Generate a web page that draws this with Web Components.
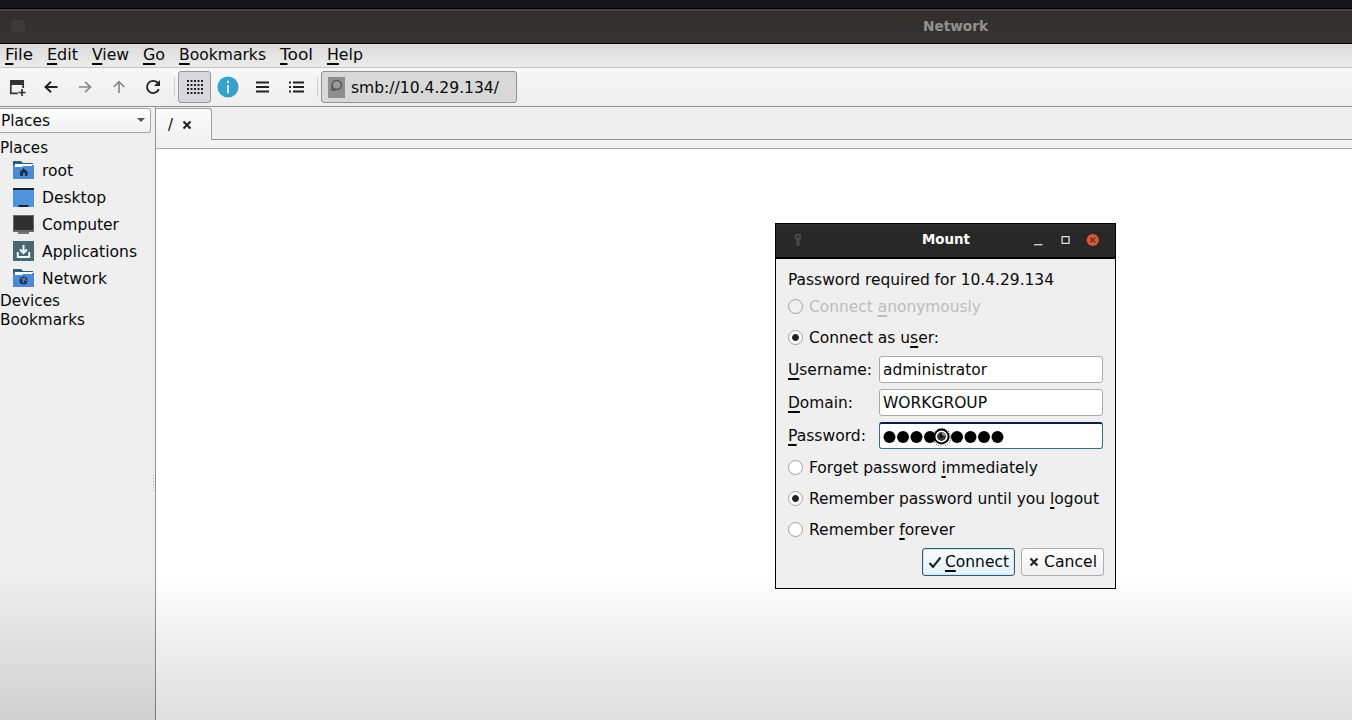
<!DOCTYPE html>
<html lang="en"><head><meta charset="utf-8"><title>Network</title>
<style>
html,body{margin:0;height:720px;overflow:hidden;background:#efefef}
body{font:16px/19px "DejaVu Sans",sans-serif;color:#080808}
</style></head><body><file-manager></file-manager>
<script>
const def=(name,html,setup)=>customElements.define(name,class extends HTMLElement{
  constructor(){super();this.attachShadow({mode:'open'}).innerHTML=html}
  connectedCallback(){if(setup)setup(this,this.shadowRoot)}
});
const svg=(w,h,body,x='')=>`<svg width="${w}" height="${h}" viewBox="0 0 ${w} ${h}" fill="none" ${x}>${body}</svg>`;
const folder='<path d="M0 1h8l2 2h10v16H0z" fill="#2f5f74"/><path d="M2 4h18v4H1z" fill="#f4fbff"/><path d="M0 6h9l2-1h10v14H0z" fill="#4f89d4"/><path d="M2 4h17v2H10L9 7H2z" fill="#f4fbff"/>';
const icons={
 newwin:svg(18,18,'<path d="M2 2h14v5H2z" fill="#333"/><path d="M2.8 6v9.3h7M15.2 6v4M14 11v7M10.5 14.5h7" stroke="#333" stroke-width="1.7"/>'),
 back:svg(18,18,'<path d="M15.5 9H4M9 3.8L3.5 9 9 14.2" stroke="#222" stroke-width="1.9"/>'),
 fwd:svg(18,18,'<path d="M3 9h11.5M9 3.8L14.5 9 9 14.2" stroke="#888" stroke-width="1.7"/>'),
 up:svg(18,18,'<path d="M9 15V4M3.7 9L9 3.7 14.3 9" stroke="#888" stroke-width="1.7"/>'),
 reload:svg(18,18,'<path d="M14.8 11.2A6.1 6.1 0 1 1 13.5 4.7L15 6.3" stroke="#222" stroke-width="1.9"/><path d="M16 2v6h-6z" fill="#222"/>'),
 grid:svg(18,18,[3,7,11,15].map(y=>[2,5.5,9,12.5,16].map(x=>`<path d="M${x-1} ${y-1}h2v2h-2z" fill="#222"/>`).join('')).join('')),
 info:svg(22,22,'<circle cx="11" cy="11" r="10.5" fill="#35a1cc"/><path d="M11 9v8.5M11 4.8v2.4" stroke="#e5faff" stroke-width="1.7"/>'),
 list:svg(18,18,'<path d="M3 4.5h13M3 9h13M3 13.5h13" stroke="#222" stroke-width="2"/>'),
 tree:svg(18,18,'<path d="M2 4.5h2M2 9h2M2 13.5h2M6 4.5h11M6 9h11M6 13.5h11" stroke="#222" stroke-width="1.9"/>'),
 drive:svg(17,21,'<path d="M0 0h17v21H0z" fill="#8e8e8e"/><circle cx="8.7" cy="8" r="4.6" stroke="#555" stroke-width="1.5" fill="#999"/><path d="M4 8v5h4" stroke="#555" stroke-width="1.3"/>'),
 arrow:svg(9,5,'<path d="M0 0h8L4 4z" fill="#505050"/>'),
 x:svg(10,10,'<path d="M1.5 1.5l7 7M8.5 1.5l-7 7" stroke="#222" stroke-width="2.1"/>'),
 root:svg(21,20,folder+'<path d="M7 12l3.5-4 4 4v4h-2.4v-3h-2v3H7z" fill="#17334f"/>'),
 desktop:svg(21,20,'<path d="M0 1h21v19H0z" fill="#4f93dc"/><path d="M0 1h21v2H0zM5.5 18h10v2h-10z" fill="#152033"/>'),
 computer:svg(21,20,'<path d="M0 1h21v17H0z" fill="#686868"/><path d="M1 2h19v14H1z" fill="#303030"/><path d="M5 18h11v2H5z" fill="#777"/>'),
 apps:svg(21,20,'<path d="M0 0h21v20H0z" fill="#496872"/><path d="M10.5 4v7M7 8.5l3.5 3.5L14 8.5M4.8 11v5h11.4v-5" stroke="#eef7f8" stroke-width="2"/>'),
 network:svg(21,20,folder+'<circle cx="10.5" cy="12.5" r="4" fill="#17334f"/><path d="M8 10l2 1v2l1 2M12 9.5l-1 2 3 1" stroke="#4f89d4" stroke-width="1.3"/>'),
 check:svg(14,14,'<path d="M1.5 8l3.5 3.8L12.5 2.5" stroke="#222" stroke-width="2.1"/>')
};
/* Text run condensed to a given advance width; a <u> child is the access key. */
def('fit-text',`<style>:host{display:block;flex:none;white-space:pre;height:19px;line-height:19px}
span{display:inline-block;transform-origin:0 50%}::slotted(u){text-decoration:underline;text-decoration-thickness:2px;text-underline-offset:3px;text-decoration-skip-ink:none}</style><span><slot></slot></span>`,(h,r)=>{
 const fit=()=>{const s=r.querySelector('span'),w=+h.getAttribute('w');h.style.width=w+'px';const n=s.offsetWidth;if(n)s.style.transform=`scaleX(${w/s.getBoundingClientRect().width})`};
 requestAnimationFrame(fit)});
def('ui-icon','<style>:host{display:flex;flex:none;align-items:center;justify-content:center}svg{display:block}</style><div></div>',(h,r)=>{r.querySelector('div').innerHTML=icons[h.getAttribute('name')]});
def('title-bar',`<style>:host{display:block;background:#15141a;height:44px}.edge{height:8px}.bar{box-sizing:border-box;height:36px;border-top:1px solid #000;border-bottom:1px solid #000;background:linear-gradient(#45444a 0 2px,#302f2d 2px,#353432);display:flex;align-items:center;padding-left:11px;color:#929190;font:bold 14px/19px "DejaVu Sans",sans-serif}i{width:14px;height:12px;border-radius:3px;background:#3c3b3a;margin-right:898px}</style><div class="edge"></div><div class="bar"><i></i><fit-text w="65">Network</fit-text></div>`);
def('menu-bar',`<style>:host{display:flex;align-items:center;box-sizing:border-box;height:24px;padding:0 0 2px 5px;border-bottom:1px solid #c6c6c6;background:linear-gradient(#dcdcdc,#ebebeb)}fit-text{margin-right:14px}</style>
<fit-text w="28"><u>F</u>ile</fit-text><fit-text w="31" style="margin-right:14px"><u>E</u>dit</fit-text><fit-text w="37"><u>V</u>iew</fit-text><fit-text w="22"><u>G</u>o</fit-text><fit-text w="87"><u>B</u>ookmarks</fit-text><fit-text w="33"><u>T</u>ool</fit-text><fit-text w="36"><u>H</u>elp</fit-text>`);
def('tool-bar',`<style>:host{display:flex;align-items:center;box-sizing:border-box;height:39px;border-bottom:1px solid #929292;background:linear-gradient(#f7f7f7,#eee)}
ui-icon{width:34px;height:32px;box-sizing:border-box}.on{border:1px solid #999;border-radius:3px;background:#d8d8da;width:33px}hr{border:0;width:1px;height:20px;background:#cfcfcf;margin:0}
.path{box-sizing:border-box;width:196px;height:32px;border:1px solid #929292;border-radius:3px;background:#d8d8d8;margin-left:3px;display:flex;align-items:center;padding-left:6px}.path ui-icon{width:17px;margin-right:6px}</style>
<ui-icon name="newwin"></ui-icon><ui-icon name="back"></ui-icon><ui-icon name="fwd"></ui-icon><ui-icon name="up"></ui-icon><ui-icon name="reload"></ui-icon><hr style="margin:0 3px 0 4px"><ui-icon class="on" name="grid"></ui-icon><ui-icon name="info"></ui-icon><ui-icon name="list"></ui-icon><ui-icon name="tree"></ui-icon><hr style="margin-left:4px"><div class="path"><ui-icon name="drive"></ui-icon><fit-text w="148">smb://10.4.29.134/</fit-text></div>`);
def('place-item',`<style>:host{display:flex;align-items:center;height:26.9px;padding-left:13px;gap:8px}</style><ui-icon></ui-icon><slot></slot>`,(h,r)=>{const i=r.querySelector('ui-icon');i.setAttribute('name',h.getAttribute('icon'));i.remove();r.insertBefore(i,r.querySelector('slot'))});
def('side-bar',`<style>:host{display:block;width:155px;flex:none;background:#efefef;position:relative}.combo{box-sizing:border-box;margin-top:1px;width:151px;height:25px;border:1px solid #a5a5a5;border-left:0;border-radius:0 3px 3px 0;background:linear-gradient(#fff,#f0f0f0);display:flex;align-items:center;justify-content:space-between;padding:0 4px 1px 1px}.first{margin-top:5px}.grip{position:absolute;left:153px;top:368px;width:1px;height:17px;background:repeating-linear-gradient(#aaa 0 1px,#efefef 1px 3px)}</style>
<div class="combo"><fit-text w="49">Places</fit-text><ui-icon name="arrow"></ui-icon></div>
<fit-text class="first" w="48">Places</fit-text>
<place-item icon="root"><fit-text w="31">root</fit-text></place-item><place-item icon="desktop"><fit-text w="64">Desktop</fit-text></place-item><place-item icon="computer"><fit-text w="77">Computer</fit-text></place-item><place-item icon="apps"><fit-text w="95">Applications</fit-text></place-item><place-item icon="network"><fit-text w="65">Network</fit-text></place-item>
<fit-text w="60">Devices</fit-text><fit-text w="85">Bookmarks</fit-text><div class="grip"></div>`);
def('tab-view',`<style>:host{display:flex;flex-direction:column;flex:1;border-left:1px solid #929292}.tabs{height:33px;display:flex;flex:none}.tab{box-sizing:border-box;width:56px;margin-top:1px;border:1px solid #a0a0a0;border-left:0;border-bottom:0;border-radius:0 3px 0 0;background:linear-gradient(#fafafa,#f2f2f2);display:flex;align-items:center;padding:0 0 0 12px;gap:9px}.rest{flex:1;border-bottom:1px solid #929292;box-sizing:border-box}.gap{height:9px;box-sizing:border-box;border-bottom:1px solid #a5a5a5;background:#f2f2f2;flex:none}.content{flex:1;background:#fff}</style>
<div class="tabs"><div class="tab"><fit-text w="5">/</fit-text><ui-icon name="x"></ui-icon></div><div class="rest"></div></div><div class="gap"></div><div class="content"></div>`);
def('radio-row',`<style>:host{display:flex;align-items:center;height:31px;gap:6px}i{box-sizing:border-box;width:15px;height:15px;border:1px solid #a2a2a2;border-radius:50%;background:#fff}:host([checked]) i{background:radial-gradient(circle,#222 0 3px,#fff 3.8px)}:host([disabled]){color:#bdbdbd}:host([disabled]) i{background:#f0f0f0}</style><i></i><slot></slot>`);
def('field-row',`<style>:host{display:flex;align-items:center;height:33px}.l{width:91px}.box{box-sizing:border-box;width:225px;height:27px;border:1px solid #a9a9a9;border-radius:3px;background:#fff;padding:0 0 1px 3px;display:flex;align-items:center;position:relative}:host([focus]) .box{border:1px solid #356f83;border-top:2px solid #17184b}</style><div class="l"><slot name="label"></slot></div><div class="box"><slot></slot></div>`);
def('pass-dots',`<style>:host{display:flex;position:relative}svg{display:block}</style>${svg(135,20,[0,1,2,3,4,5,6,7,8].map(i=>`<circle cx="${6.5+i*13.5}" cy="11" r="6" fill="#000"/>`).join('')+'<circle cx="59" cy="11.5" r="8.8" stroke="#222" stroke-width="1" stroke-dasharray="1 1.4"/><circle cx="58.5" cy="10.5" r="7" fill="#fff" stroke="#000" stroke-width="1.8"/><circle cx="58.5" cy="10.5" r="4.4" fill="#333"/><path d="M59 10V6a4.2 4.2 0 0 1 4 4z" fill="#888"/><circle cx="58.5" cy="10" r="1.5" fill="#000"/>')}`);
def('push-button',`<style>:host{display:flex;align-items:center;box-sizing:border-box;height:28px;border:1px solid #adadad;border-radius:3px;background:linear-gradient(#fff,#efefef);padding:0 0 1px 7px;gap:5px}:host([default]){border-color:#315a73;background:linear-gradient(#fbfdff,#e3f1f8);padding-left:5px;gap:3px;box-shadow:inset 0 0 0 1px #cce6f2}</style><slot></slot>`);
def('mount-dialog',`<style>:host{display:block;position:absolute;left:775px;top:223px;width:341px;height:366px;box-sizing:border-box;border:1px solid #000;border-right-width:1.5px;background:#efefef}.head{box-sizing:border-box;height:35px;background:linear-gradient(#303030,#272727 3px,#282828);border-bottom:2px solid #000;display:flex;align-items:center;padding:0 14px 2px 18px;color:#fff;font:bold 14px/19px "DejaVu Sans",sans-serif}.head fit-text{margin:0 64px 0 120px}.body{padding:11px 12px 0 12px}.anon{height:25px;margin-top:5px;margin-bottom:3px}.buttons{display:flex;justify-content:flex-end;gap:6px;margin-top:3px;width:316px}svg{display:block}</style>
<div class="head">${svg(8,14,'<circle cx="4" cy="4" r="3.5" fill="#484848"/><path d="M2.5 7h3v6h-3z" fill="#484848"/><circle cx="4" cy="3.5" r="1" fill="#222"/>')}<fit-text w="48">Mount</fit-text>${svg(68,14,'<path d="M0 11.8h8.5" stroke="#ddd" stroke-width="1.3"/><path d="M28.5 3.5h7v7h-7z" stroke="#ddd" stroke-width="1.3"/><circle cx="59.5" cy="7" r="6.2" fill="#d9573a"/><path d="M57 4.5l5 5M62 4.5l-5 5" stroke="#692718" stroke-width="1.2"/>')}</div>
<div class="body"><fit-text w="266">Password required for 10.4.29.134</fit-text>
<radio-row class="anon" disabled><fit-text w="172">Connect <u>a</u>nonymously</fit-text></radio-row>
<radio-row><fit-text w="130">Connect as u<u>s</u>er:</fit-text></radio-row>
<field-row><fit-text slot="label" w="84"><u>U</u>sername:</fit-text><fit-text w="104">administrator</fit-text></field-row>
<field-row><fit-text slot="label" w="65"><u>D</u>omain:</fit-text><fit-text w="104">WORKGROUP</fit-text></field-row>
<field-row focus><fit-text slot="label" w="78"><u>P</u>assword:</fit-text><pass-dots></pass-dots></field-row>
<radio-row><fit-text w="229">Forget password <u>i</u>mmediately</fit-text></radio-row>
<radio-row checked><fit-text w="290">Remember password until you <u>l</u>ogout</fit-text></radio-row>
<radio-row><fit-text w="146">Remember <u>f</u>orever</fit-text></radio-row>
<div class="buttons"><push-button default style="width:93px"><ui-icon name="check"></ui-icon><fit-text w="64"><u>C</u>onnect</fit-text></push-button><push-button style="width:83px"><ui-icon name="x"></ui-icon><fit-text w="53">Cancel</fit-text></push-button></div></div>`,(h,r)=>{r.querySelectorAll('radio-row')[1].setAttribute('checked','')});
def('file-manager',`<style>:host{display:flex;flex-direction:column;height:720px;width:1352px;position:relative;overflow:hidden;background:#efefef}.main{display:flex;flex:1}.shade{position:absolute;left:0;right:0;bottom:0;height:150px;background:linear-gradient(transparent,rgba(0,0,0,.13));pointer-events:none}</style><title-bar></title-bar><menu-bar></menu-bar><tool-bar></tool-bar><div class="main"><side-bar></side-bar><tab-view></tab-view></div><div class="shade"></div><mount-dialog></mount-dialog>`);
</script></body></html>
